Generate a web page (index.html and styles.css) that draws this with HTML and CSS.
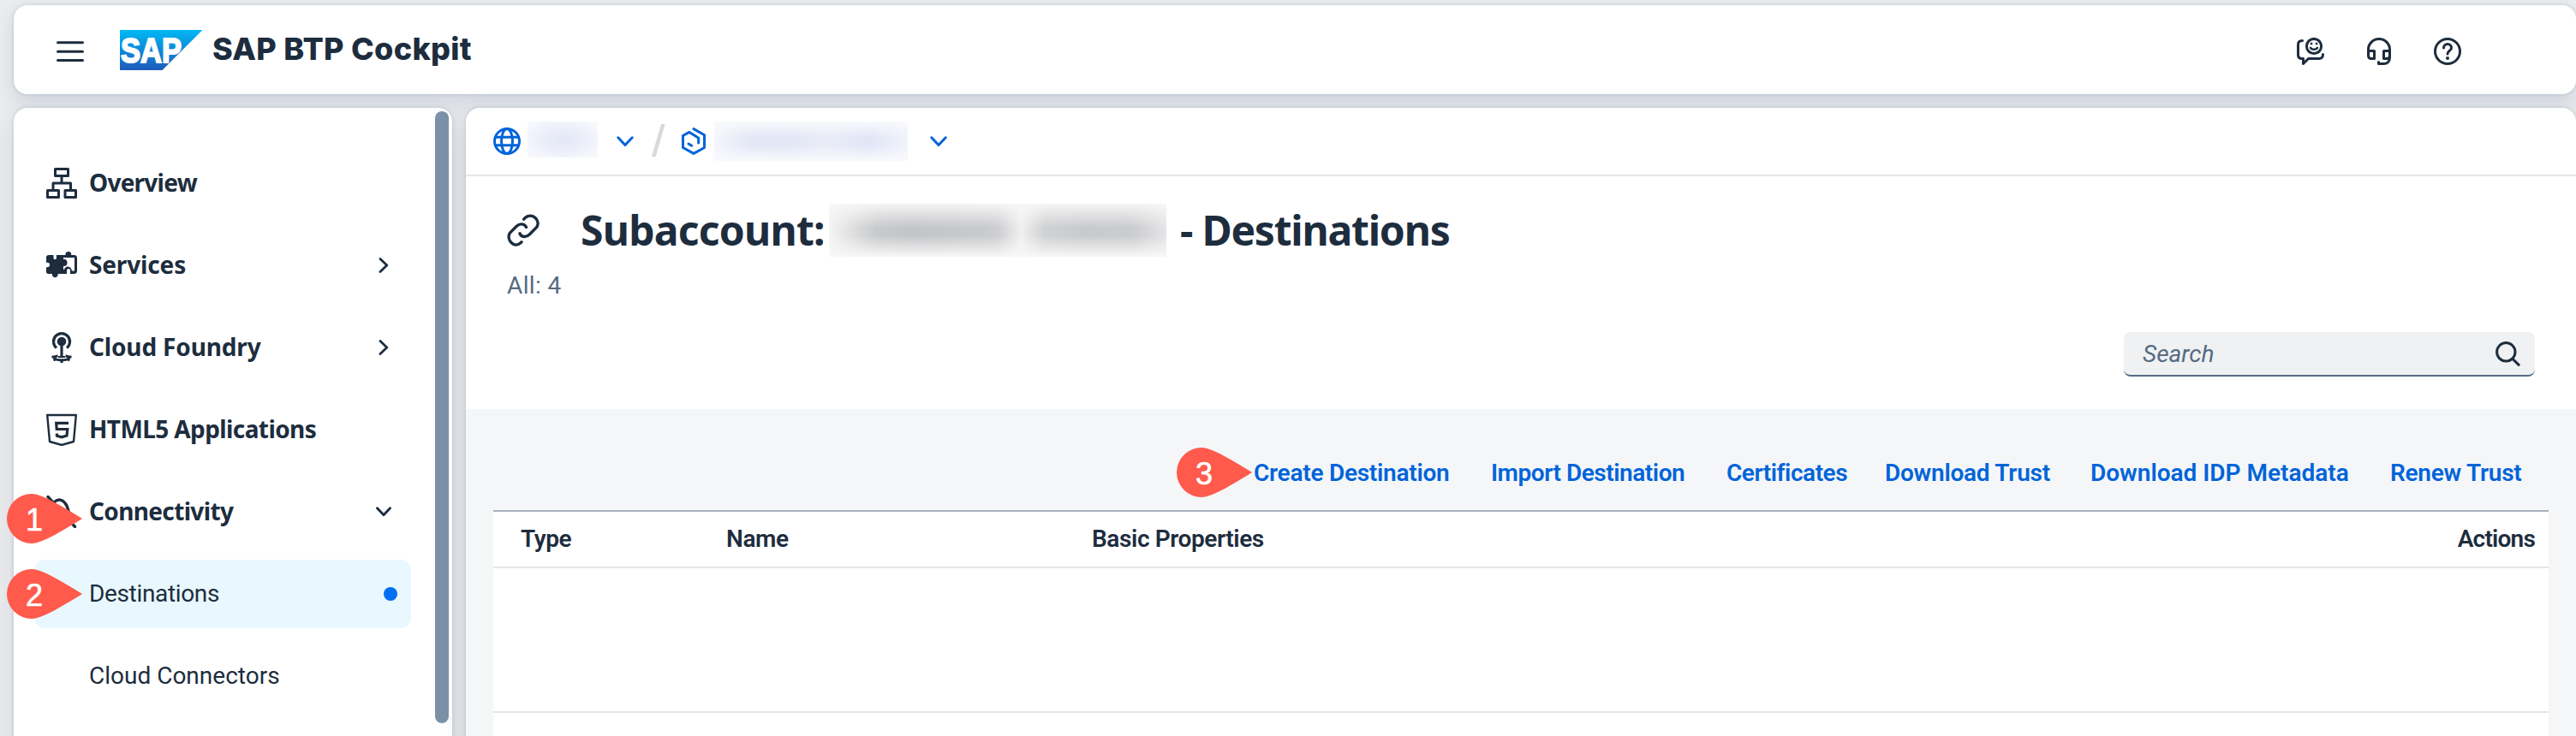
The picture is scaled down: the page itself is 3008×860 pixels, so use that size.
FILE: index.html
```html
<!DOCTYPE html>
<html lang="en">
<head>
<meta charset="utf-8">
<title>SAP BTP Cockpit</title>
<link rel="stylesheet" href="styles.css">
</head>
<body>
<header class="shell">
  <svg class="menu-icon" width="32" height="24" viewBox="0 0 32 24" fill="none" stroke="currentColor" stroke-width="3" stroke-linecap="round"><path d="M1.500 1.800h29M1.500 12.300h29M1.500 22.400h29"/></svg>
  <svg class="logo" width="97" height="47" viewBox="0 0 97 47">
    <defs><linearGradient id="sap" x1="0" y1="0" x2="0" y2="1"><stop offset="0" stop-color="#00b8f4"/><stop offset="1" stop-color="#1f5bbb"/></linearGradient></defs>
    <path d="M0 0H96.500L49.500 47H0z" fill="url(#sap)"/>
    <text x="1" y="37.500" textLength="71" lengthAdjust="spacingAndGlyphs" class="logo-text">SAP</text>
  </svg>
  <h1 class="product">SAP BTP Cockpit</h1>
  <div class="shell-actions">
    <svg width="32" height="32" viewBox="0 0 32 32" fill="none" stroke="currentColor" stroke-width="3" stroke-linecap="round" stroke-linejoin="round">
      <path d="M6.500 3.500C3.500 3.500 1.500 5 1.500 8v12c0 3 1.500 4.500 4.500 4.500h1.500V30.500l6-6H26c3 0 4.500-1.700 4.500-5"/>
      <circle cx="20" cy="10" r="8.600"/><path d="M16 11.800c1 2.600 7 2.600 8 0" stroke-width="2.400"/>
      <path d="M17 7h.1M23 7h.1" stroke-width="2.400" stroke-linecap="square"/>
    </svg>
    <svg width="28" height="32" viewBox="0 0 28 32" fill="none" stroke="currentColor" stroke-width="3" stroke-linecap="round" stroke-linejoin="round">
      <path d="M1.500 20V14a12.500 12.500 0 0 1 25 0v9c0 5-3 7.500-7 7.500h-6v-2"/>
      <path d="M1.500 15.500H8.500v9H5c-2.200 0-3.500-1.300-3.500-3.500zM26.500 15.500H19.500v9H23c2.200 0 3.500-1.300 3.500-3.500z"/>
    </svg>
    <svg width="32" height="32" viewBox="0 0 32 32" fill="none" stroke="currentColor" stroke-width="3" stroke-linecap="round">
      <circle cx="16" cy="16" r="14.500"/><path d="M11.500 12c0-6 9-6 9 0 0 3.500-4.500 3-4.500 7"/><circle cx="16" cy="24" r="2" fill="currentColor" stroke="none"/>
    </svg>
  </div>
</header>

<div class="body">
  <aside class="side">
    <nav class="nav">
      <a class="item top">
        <svg width="36" height="36" viewBox="0 0 36 36" fill="none" stroke="currentColor" stroke-width="3" stroke-linejoin="round"><path d="M10.500 1.500h15v8h-15zM1.500 26.500h13v8h-13zM22 26.500h12.500v8H22zM18 10v8M8 26v-8h20.500v8"/></svg>
        <span class="t-overview">Overview</span></a>
      <a class="item top">
        <svg width="36" height="36" viewBox="0 0 36 36" fill="currentColor">
          <path d="M3 6h5.500v3.500a1.700 1.700 0 0 0 3.400 0V6H20v5c4.500-1.500 5.500 8.500 0 7.500V28h-6.500c1.200 5.500-7.500 5.500-6.500 0H2.500C1 28 0 27 0 25.500V20c5.500 1.500 5.500-6.500 0-5V8.500C0 7 1 6 3 6z"/>
          <path d="M20 6h2.600c-1.300-5.400 7.800-5.400 6.500 0H32.500c2.300 0 3.500 1.200 3.500 3.500v15c0 2.300-1.200 3.500-3.500 3.500H28v-4a2 2 0 0 0-4 0v4h-6v-5h3c1-5 8-5 9 1.500h3V9H20z"/>
          <circle cx="20.500" cy="15" r="4"/>
        </svg>
        <span class="t-services">Services</span>
        <svg class="arrow" width="12" height="18" viewBox="0 0 12 18" fill="none" stroke="currentColor" stroke-width="2.800" stroke-linecap="round" stroke-linejoin="round"><path d="M2 1.500l7.800 7.500L2 16.500"/></svg></a>
      <a class="item top">
        <svg width="36" height="38" viewBox="0 0 36 38" fill="none" stroke="currentColor">
          <path d="M12 19.500a9.500 9.500 0 1 1 12 0" stroke-width="3.200"/>
          <circle cx="18" cy="12" r="5.300" fill="currentColor" stroke="none"/><path d="M18 13v17" stroke-width="3.200"/>
          <path d="M13.500 28.800C7 30 8.500 33.800 18 33.800s11-3.800 4.500-5" stroke-width="3"/>
          <path d="M14 30h8" stroke-width="2"/>
          <path d="M6.500 30h4M25.500 30h4M8.500 34l3-1.500M27.500 34l-3-1.500M18 37v-3" stroke-width="3"/>
        </svg>
        <span class="t-cloud">Cloud Foundry</span>
        <svg class="arrow" width="12" height="18" viewBox="0 0 12 18" fill="none" stroke="currentColor" stroke-width="2.800" stroke-linecap="round" stroke-linejoin="round"><path d="M2 1.500l7.800 7.500L2 16.500"/></svg></a>
      <a class="item top">
        <svg width="36" height="38" viewBox="0 0 36 38" fill="none" stroke="currentColor" stroke-width="2.400" stroke-linejoin="round"><path d="M1.200 2h33.600L32 33l-14 4-14-4z"/><path d="M26 11.300H11.700l.5 7.200h12.600l-.8 7.500-6 1.900-5.500-1.700-.3-2.700" stroke-width="3.200" stroke-linejoin="miter"/></svg>
        <span class="t-html">HTML5 Applications</span></a>
      <a class="item top">
        <svg width="36" height="38" viewBox="0 0 36 38" fill="none" stroke="currentColor" stroke-width="3.400" stroke-linecap="round"><path d="M2 1.500l31.500 35M9 8c6-6 12-2 15 4l3 9-8 8c-5 3-11 1-13-4z"/></svg>
        <span class="t-conn">Connectivity</span>
        <svg class="arrow down" width="18" height="12" viewBox="0 0 18 12" fill="none" stroke="currentColor" stroke-width="2.800" stroke-linecap="round" stroke-linejoin="round"><path d="M1.500 1.800L9 9.800l7.500-8"/></svg></a>
      <a class="item sub selected"><span class="t-dest">Destinations</span><i class="dot"></i></a>
      <a class="item sub"><span>Cloud Connectors</span></a>
    </nav>
    <div class="scrollbar"></div>
  </aside>

  <main class="main">
    <div class="crumbs">
      <svg width="32" height="32" viewBox="0 0 32 32" fill="none" stroke="currentColor" stroke-width="3"><circle cx="16" cy="16" r="14.500"/><ellipse cx="16" cy="16" rx="6.500" ry="14.500"/><path d="M3 11.300h26M3 20.700h26"/></svg>
      <span class="redact r1"></span>
      <svg class="c1" width="20" height="13" viewBox="0 0 20 13" fill="none" stroke="currentColor" stroke-width="3" stroke-linecap="round" stroke-linejoin="round"><path d="M1.800 1.800L10 10.500l8.200-8.700"/></svg>
      <svg class="slash" width="16" height="38" viewBox="0 0 16 38" fill="#d9d9d9"><path d="M11 0h4.500L4.700 38H0z"/></svg>
      <svg class="cube" width="28" height="32" viewBox="0 0 28 32" fill="none" stroke="currentColor" stroke-width="3" stroke-linecap="round" stroke-linejoin="round"><path d="M14 1.600L26.500 8.700v14.800L14 30.400 1.500 23.500V9.500L9 5.400l10.700 6.800V18M8 19l3.700 2.200"/></svg>
      <span class="redact r2"></span>
      <svg class="c2" width="20" height="13" viewBox="0 0 20 13" fill="none" stroke="currentColor" stroke-width="3" stroke-linecap="round" stroke-linejoin="round"><path d="M1.800 1.800L10 10.500l8.200-8.700"/></svg>
    </div>

    <section class="page-head">
      <div class="title-row">
        <svg width="38" height="38" viewBox="0 0 38 38" fill="none" stroke="currentColor" stroke-width="3.400" stroke-linecap="round"><path d="M19.700 6.200l2-2.100c7.800-6 18 3.500 13 11.400l-8.200 8.300c-4 4-9.800 3.500-11.500-1"/><path d="M22.500 15.500c-2-4.700-7.800-4.700-11.500-1L3.500 22c-5 8 5 18.500 12.200 12l1.300-1.300"/></svg>
        <h2><span class="t-sub">Subaccount:</span><span class="redact r3"></span><span class="t-hdest">- Destinations</span></h2>
      </div>
      <p class="count">All: 4</p>
      <div class="search">
        <span>Search</span>
        <svg width="29" height="29" viewBox="0 0 29 29" fill="none" stroke="currentColor" stroke-width="3" stroke-linecap="round"><circle cx="12.300" cy="12.300" r="10.700"/><path d="M20 20.300l7.200 7"/></svg>
      </div>
    </section>

    <section class="content">
      <div class="toolbar">
        <a>Create Destination</a><a class="tight">Import Destination</a><a class="tight">Certificates</a><a>Download Trust</a><a class="wide">Download IDP Metadata</a><a>Renew Trust</a>
      </div>
      <div class="table">
        <div class="row head"><span>Type</span><span>Name</span><span>Basic Properties</span><span class="end">Actions</span></div>
        <div class="row blank"></div>
      </div>
    </section>
  </main>
</div>

<div class="callout k1"><svg width="88" height="58" viewBox="0 0 88 58"><path d="M88 29C70 18 42 0 29 0a29 29 0 0 0 0 58C42 58 70 40 88 29z"/></svg><b>1</b></div>
<div class="callout k2"><svg width="88" height="58" viewBox="0 0 88 58"><path d="M88 29C70 18 42 0 29 0a29 29 0 0 0 0 58C42 58 70 40 88 29z"/></svg><b>2</b></div>
<div class="callout k3"><svg width="88" height="58" viewBox="0 0 88 58"><path d="M88 29C70 18 42 0 29 0a29 29 0 0 0 0 58C42 58 70 40 88 29z"/></svg><b>3</b></div>
</body>
</html>
```
FILE: styles.css
```css
* { box-sizing: border-box; margin: 0; }
html, body { height: 860px; overflow: hidden; }
body {
  background: #ecedef;
  color: #1d2d3e;
  font: 28px/36px Roboto, "Liberation Sans", sans-serif;
  padding: 6px 0 0 16px;
  display: flex;
  flex-direction: column;
  gap: 16px;
  position: relative;
}
svg { display: block; flex: none; }
.shell, .side, .main {
  background: #fff;
  box-shadow: 0 0 4px rgba(85, 107, 130, .24), 0 8px 32px rgba(85, 107, 130, .18);
}
.shell {
  flex: none;
  height: 104px;
  border-radius: 16px;
  display: flex;
  align-items: center;
  padding-right: 134px;
  box-shadow: 0 0 4px rgba(85, 107, 130, .24), 0 8px 24px rgba(85, 100, 150, .2);
}
.menu-icon { margin: 4px 0 0 50px; }
.logo { margin: 0 0 0 42px; }
.logo-text { font: bold 41px "Liberation Sans", Arial, sans-serif; fill: #fff; stroke: #fff; stroke-width: 2px; }
.product { font: 800 36px/48px Inter, Roboto, sans-serif; letter-spacing: .3px; margin: -3px 0 0 11px; }
.shell-actions { margin: 4px 0 0 auto; display: flex; gap: 50px; }

.body { flex: none; height: 760px; display: grid; grid-template-columns: 512px 1fr; gap: 16px; }
.side { border-radius: 16px; display: flex; padding-right: 4px; }
.nav { flex: 1; padding: 48px 28px 0 24px; display: flex; flex-direction: column; gap: 16px; }
.item { height: 80px; flex: none; border-radius: 12px; display: flex; align-items: center; padding-left: 14px; }
.item span { margin-left: 14px; }
.item.top { font-family: "Noto Sans", Roboto, sans-serif; font-weight: 700; }
.item.top span { margin-top: -3px; }
.item.sub span { margin-left: 50px; }
.arrow { margin: 0 26px 0 auto; }
.arrow.down { margin-right: 23px; }
.selected { background: #e9f8ff; }
.dot { width: 16px; height: 16px; border-radius: 50%; background: #0070f2; margin: 0 16px 0 auto; }
.t-overview { letter-spacing: -.75px; }
.t-services { letter-spacing: -.15px; }
.t-cloud { letter-spacing: -.15px; }
.t-html { letter-spacing: -.6px; }
.t-conn { letter-spacing: -.65px; }
.t-dest { letter-spacing: -.35px; }
.scrollbar { width: 16px; height: 715px; margin-top: 4px; border-radius: 8px; background: #7b91a8; }

.main { border-radius: 16px 16px 0 0; overflow: hidden; display: flex; flex-direction: column; }
.crumbs { flex: none; height: 80px; border-bottom: 2px solid #e5e5e5; padding-left: 32px; display: flex; align-items: center; color: #0064d9; }
.redact { display: block; flex: none; }
.r1 { width: 82px; height: 42px; margin: -4px 0 0 8px; background: radial-gradient(ellipse at 50% 50%, #e3e8f7 0%, #ebeef9 40%, #f8f9fd 90%); }
.c1 { margin-left: 22px; }
.slash { margin: -2px 0 0 21px; }
.cube { margin-left: 19px; }
.r2 { width: 226px; height: 46px; margin-left: 10px; background: linear-gradient(#f9fafd 0%, #f9fafd00 40%, #f9fafd00 60%, #f9fafd 100%), linear-gradient(90deg, #f5f6fc 0%, #e4e8f6 18%, #e3e7f6 40%, #eaedf8 58%, #e1e5f6 80%, #f1f3fb 100%); }
.c2 { margin-left: 26px; }

.page-head { flex: none; height: 272px; padding: 32px 48px 0; display: flex; flex-direction: column; }
.title-row { display: flex; align-items: center; height: 62px; }
h2 { display: flex; align-items: center; font: 700 48px/62px "Noto Sans", Roboto, sans-serif; margin-left: 48px; white-space: pre; }
.t-sub { letter-spacing: -.75px; width: 290px; }
.t-hdest { letter-spacing: -1.2px; margin-left: 16px; }
.r3 { width: 394px; height: 62px; background: linear-gradient(#f8f8f8ee 0%, #f8f8f800 45%, #f8f8f800 60%, #f8f8f8f0 98%), linear-gradient(90deg, #f4f4f4 0%, #c9cacc 14%, #c4c5c7 25%, #c9cacc 45%, #cdced0 50%, #f0f0f1 57%, #d0d1d3 64%, #c9cacc 76%, #cbccce 90%, #e5e5e7 100%); }
.count { color: #556b82; margin-top: 16px; letter-spacing: .4px; }
.search { width: 480px; height: 52px; margin: 36px 0 0 auto; background: #eff1f2; border-bottom: 2px solid #556b82; border-radius: 8px; display: flex; align-items: center; justify-content: space-between; padding: 1px 17px 0 22px; }
.search span { font-style: italic; color: #556b82; }

.content { flex: 1; background: #f5f6f8; padding: 46px 32px 0; }
.toolbar { height: 72px; padding-bottom: 14px; margin-right: 30px; display: grid; grid-template-columns: 277px 275px 185px 240px 350px 155px; justify-content: end; align-items: center; color: #0064d9; font-weight: 600; letter-spacing: -.25px; white-space: nowrap; }
.toolbar .tight { letter-spacing: -.45px; }
.toolbar .wide { letter-spacing: 0; }
.table { background: #fff; border-top: 2px solid #a8b3bf; height: 300px; }
.row { border-bottom: 2px solid #e5e5e5; }
.head { height: 66px; display: grid; grid-template-columns: 240px 427px 1fr auto; align-items: center; padding: 0 16px 0 32px; font-weight: 600; letter-spacing: -.4px; }
.end { letter-spacing: -.8px; }
.blank { height: 169px; }

.callout { position: absolute; width: 88px; height: 58px; }
.callout svg { fill: #ff5a4c; }
.callout b { position: absolute; left: 22px; top: 11px; font: 36px/40px "Liberation Sans", Arial, sans-serif; color: #fff; -webkit-text-stroke: .6px #fff; }
.k1 { left: 8px; top: 577px; }
.k2 { left: 8px; top: 665px; }
.k3 { left: 1374px; top: 523px; }
```
